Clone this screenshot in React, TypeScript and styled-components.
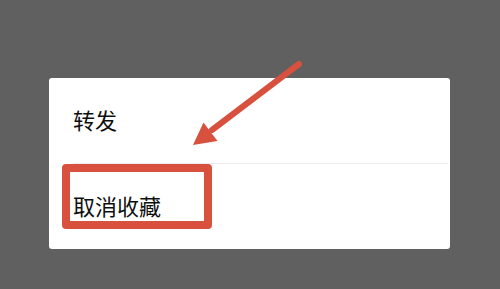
import { createGlobalStyle, styled } from "styled-components";

const GlobalStyle = createGlobalStyle`
  html, body {
    margin: 0;
    padding: 0;
    background: #5f605f;
  }
  * {
    box-sizing: border-box;
  }
`;

const Screen = styled.div`
  position: relative;
  width: 500px;
  height: 289px;
  padding: 78px 0 0 49px;
  background: #5f605f;
  font-family: "Noto Sans CJK SC", "Noto Sans", sans-serif;
  overflow: hidden;
`;

const Sheet = styled.div`
  width: 401px;
  height: 171px;
  background: #ffffff;
  border-radius: 3px;
  display: flex;
  flex-direction: column;
`;

const MenuItem = styled.div`
  flex: 1;
  display: flex;
  align-items: center;
  padding: 0 0 3px 24px;
  font-size: 22px;
  color: #0f0f0f;
`;

const Divider = styled.div`
  height: 1px;
  margin-left: 24px;
  margin-right: 2px;
  background: #ececec;
`;

const Highlight = styled.div`
  position: absolute;
  left: 62px;
  top: 164px;
  width: 150px;
  height: 65px;
  border: 8px solid #d8513f;
  border-radius: 4px;
`;

const ArrowLayer = styled.svg`
  position: absolute;
  left: 0;
  top: 0;
  pointer-events: none;
`;

export default function App() {
  return (
    <>
      <GlobalStyle />
      <Screen>
        <Sheet>
          <MenuItem>转发</MenuItem>
          <Divider />
          <MenuItem>取消收藏</MenuItem>
        </Sheet>

        {/* annotation overlay */}
        <Highlight />
        <ArrowLayer width={500} height={289} viewBox="0 0 500 289">
          <line
            x1={299}
            y1={64}
            x2={212}
            y2={130}
            stroke="#d8513f"
            strokeWidth={6}
            strokeLinecap="round"
          />
          <polygon points="193,145 203.5,122.5 217.5,141" fill="#d8513f" />
        </ArrowLayer>
      </Screen>
    </>
  );
}
